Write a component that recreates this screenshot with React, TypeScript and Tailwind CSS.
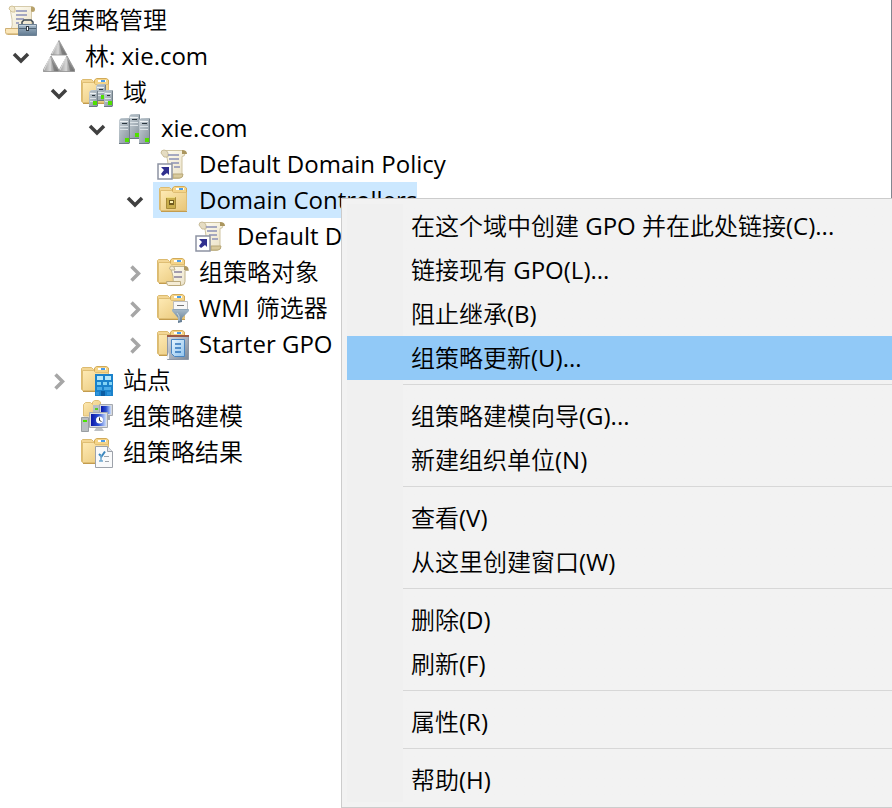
import React, { useState } from 'react';

type IconProps = { children: React.ReactNode };

const Icon = ({ children }: IconProps) => (
  <svg viewBox="0 0 32 32" className="size-8 shrink-0" aria-hidden="true">
    {children}
  </svg>
);

const Gradients = () => (
  <svg className="absolute size-0" aria-hidden="true">
    <defs>
      <linearGradient id="folder" x1="0" y1="0" x2="1" y2="1">
        <stop offset="0" stopColor="#feeab4" />
        <stop offset="1" stopColor="#e8c678" />
      </linearGradient>
      <linearGradient id="paper" x1="0" y1="0" x2="1" y2="1">
        <stop offset="0" stopColor="#fffdf2" />
        <stop offset="1" stopColor="#e9dfc4" />
      </linearGradient>
      <linearGradient id="metal" x1="0" y1="0" x2="1" y2="1">
        <stop offset="0" stopColor="#c9d2d8" />
        <stop offset="1" stopColor="#83909a" />
      </linearGradient>
      <linearGradient id="stone" x1="0" y1="0" x2="1" y2="0">
        <stop offset="0.1" stopColor="#a8a8a8" />
        <stop offset="0.45" stopColor="#d8d8d8" />
        <stop offset="0.55" stopColor="#b0b0b0" />
        <stop offset="1" stopColor="#7c7c7c" />
      </linearGradient>
      <linearGradient id="steel" x1="0" y1="0" x2="0" y2="1">
        <stop offset="0" stopColor="#a9bccb" />
        <stop offset="1" stopColor="#5f788f" />
      </linearGradient>
      <linearGradient id="frame" x1="0" y1="0" x2="1" y2="1">
        <stop offset="0" stopColor="#d9dde4" />
        <stop offset="1" stopColor="#7b8796" />
      </linearGradient>
      <linearGradient id="blue" x1="0" y1="0" x2="1" y2="1">
        <stop offset="0" stopColor="#e8f6ff" />
        <stop offset="1" stopColor="#8fc3ee" />
      </linearGradient>
      <linearGradient id="screen" x1="0" y1="0" x2="1" y2="0">
        <stop offset="0" stopColor="#0a16a8" />
        <stop offset="0.5" stopColor="#2b4fd0" />
        <stop offset="1" stopColor="#c9dcfb" />
      </linearGradient>
    </defs>
  </svg>
);

const Folder = () => (
  <>
    <path d="M0.5 4.5l1-1h9l2 2v20h-12z" fill="#f3d694" stroke="#dcbb70" />
    <path d="M13.500 9V4l2-1.500h10l2 1.500v5z" fill="#f4d488" stroke="#d2aa58" />
    <path d="M17 4h8v2h-8z" fill="#fff" />
    <path d="M20 4h4v2h-4z" fill="#4b9be6" />
    <path d="M1.500 6.500h11l2 2h13v18h-26z" fill="url(#folder)" stroke="#dfbe74" />
    <path d="M2 27.500h26" stroke="#c39c4e" />
  </>
);

type ServerProps = { x: number; y: number; w: number; h: number };

const Server = ({ x, y, w, h }: ServerProps) => (
  <g>
    <path d={`M${x} ${y + 2}l2-2h${w - 2}v${h - 1}l-1 1h-${w - 1}z`} fill="url(#metal)" />
    <path d={`M${x + 1} ${y + 1.5}h${w - 2}`} stroke="#aab6bf" />
    <path d={`M${x + 1} ${y + 3.5}h${w - 3}`} stroke="#eef2f4" />
    <path d={`M${x + 3} ${y + 5.5}h${w - 6}`} stroke="#2b363e" />
    <path d={`M${x + 1} ${y + 8.5}h${w - 3}M${x + 1} ${y + 11.5}h${w - 3}`} stroke="#dbe2e6" />
    <path d={`M${x + w - 0.5} ${y + 1}v${h - 2}`} stroke="#73808a" />
    <path d={`M${x} ${y + h - 0.5}h${w - 1}`} stroke="#6d7983" />
    <path d={`M${x + w - 5} ${y + h - 6}h4v4h-4z`} fill="#4fe000" />
  </g>
);

const ConsoleIcon = () => (
  <Icon>
    <path d="M5.500 2.500h21q3 0 3 3t-3 2v18H6q2-4 1-10T5.500 7z" fill="url(#paper)" stroke="#d6cbab" />
    <path d="M26 2.500q4 0 4 3t-4 2z" fill="#b7a16a" />
    <path d="M4 5q0-3 3-3t3 3v3H7z" fill="#f1e8cd" stroke="#d3c49b" />
    <path d="M11 7h11M11 11h11M11 15h8M11 19h3" stroke="#8a90b8" strokeWidth="1.500" />
    <path d="M0.500 24.500h14v6h-12q-2 0-2-3z" fill="#fbe6b8" stroke="#cfb074" />
    <path d="M1 29.500h12" stroke="#dfc58d" />
    <path d="M17 20v-2l2-2h7l2 2v2" fill="none" stroke="#3f4a53" strokeWidth="1.500" />
    <path d="M13.500 20.500h18v11h-18z" fill="url(#steel)" stroke="#6f8396" />
    <path d="M14 21.500h17" stroke="#c5d3de" />
    <path d="M14 24.500h17" stroke="#4f6375" />
    <path d="M21 22h3v5h-3z" fill="#343d45" />
    <path d="M22 23h1v3h-1z" fill="#fff" />
  </Icon>
);

const ForestIcon = () => (
  <Icon>
    <g fill="url(#stone)" stroke="#8d8d8d" strokeWidth="0.800" strokeLinejoin="round">
      <path d="M16 0.500l8 14.500H8z" />
      <path d="M8 16l7.800 14v1.500H0.300V30z" />
      <path d="M24 16l7.800 14v1.500H16.300V30z" />
    </g>
    <path d="M15 2L9 14M7 17.500L1 30M23 17.500L17 30" stroke="#eee" strokeWidth="0.800" />
    <path d="M16 2l7 12.500h-4zM8 18l7 13h-4zM24 18l7 13h-4z" fill="#555" fillOpacity="0.400" />
  </Icon>
);

const DomainsIcon = () => (
  <Icon>
    <Folder />
    <Server x={15} y={8} w={10} h={17} />
    <Server x={8} y={14} w={9} h={17} />
    <Server x={23} y={14} w={9} h={17} />
  </Icon>
);

const DomainIcon = () => (
  <Icon>
    <Server x={10} y={2} w={11} h={25} />
    <Server x={0} y={6} w={11} h={26} />
    <Server x={20} y={6} w={11} h={26} />
  </Icon>
);

const PolicyLinkIcon = () => (
  <Icon>
    <path d="M7 2.500h18q3 0 3 3t-3 3v19q-1 3-4 3H11V16q0-6-3-10z" fill="url(#paper)" stroke="#cfc4a2" />
    <path d="M25 2q5 0 5 4h-5z" fill="#ab965f" />
    <path d="M4 5q0-3 3-3t4 3v4H7z" fill="#e5dcc2" stroke="#c9bd9b" />
    <path d="M11 7h11M12 11h10M14 15h8M17 19h6" stroke="#8b90b5" strokeWidth="1.500" />
    <path d="M16 26h10q0 4-3 4h-7z" fill="#d8c99c" stroke="#b8a878" />
    <path d="M1 16h14v15H1z" fill="#fff" stroke="#8d93a3" strokeWidth="1.500" />
    <path d="M4 19h8v8l-2-2-4 3-2-2 3-4z" fill="#30308f" />
  </Icon>
);

const OuIcon = () => (
  <Icon>
    <g transform="translate(2 0)">
      <Folder />
    </g>
    <path d="M9.500 13.500h9v11h-9z" fill="#c9ad4c" stroke="#a88b38" />
    <path d="M9 13.500h9" stroke="#efdc86" />
    <path d="M12 16h5v5h-5z" fill="#6f591f" />
    <path d="M13 17h3v2h-3z" fill="#fff3b4" />
  </Icon>
);

const ObjectsIcon = () => (
  <Icon>
    <Folder />
    <path d="M14 10.500h14q3.500 0 3.500 4H28v11q0 4-4 4h-9q2-4 1-9t-2-7z" fill="url(#paper)" stroke="#c2b48c" />
    <path d="M27 10q5 0 4 4h-4z" fill="#b09a62" />
    <path d="M12.500 13q0-3 2.500-3t3 4h-4z" fill="#f3ead2" stroke="#c2b48c" />
    <path d="M17 16h8M17 21h8" stroke="#86809a" strokeWidth="1.500" />
    <path d="M9.500 25.500h14v4h-12q-2 0-2-4z" fill="#f5ecd5" stroke="#bba97c" />
  </Icon>
);

const FilterIcon = () => (
  <Icon>
    <Folder />
    <path d="M16.500 9.500h14v9h-14z" fill="#f8f8f8" stroke="#bcbcbc" />
    <path d="M20 13.500h7" stroke="#777" />
    <path d="M15 17h17v2l-7 7v4l-4 1v-5l-6-7z" fill="url(#steel)" />
    <path d="M16 17.500h15" stroke="#8fa5b7" />
    <path d="M20 21l2 3v5" stroke="#c5d6e2" fill="none" />
  </Icon>
);

const StarterIcon = () => (
  <Icon>
    <Folder />
    <path d="M10.500 7.500h21v24h-21z" fill="url(#frame)" stroke="#8f98a6" />
    <path d="M10 7h22v2H10z" fill="#9c5a45" />
    <path d="M9 31l3-7v7z" fill="#f4f5f7" />
    <path d="M14.500 11.500h13v17h-10l-3-3z" fill="url(#blue)" stroke="#4a86c2" />
    <path d="M18 16h6M18 20h6M18 24h6" stroke="#2f74ba" strokeWidth="1.500" />
  </Icon>
);

const SitesIcon = () => (
  <Icon>
    <Folder />
    <path d="M14 10h18v22H14z" fill="#1a82cb" />
    <path d="M16 12h6v4h-6zM24 12h6v4h-6z" fill="#b7e8fa" />
    <path d="M16 18h4v3h-4zM22 18h4v3h-4zM28 18h3v3h-3z" fill="#83d4f5" />
    <path d="M16 23h5v3h-5zM23 23h7v3h-7z" fill="#4bade8" />
    <path d="M15 28h3v3h-3zM26 28h4v3h-4z" fill="#2f95dc" />
    <path d="M20 27h4v5h-4z" fill="#0b5da3" />
  </Icon>
);

const ModelingIcon = () => (
  <Icon>
    <path d="M2.500 4.500l2-2h5l2 2V2l2-1.500h4l2 1.500v14h-17z" fill="url(#folder)" stroke="#e0c078" />
    <path d="M12 5h6v15h-6z" fill="#b9c0c4" />
    <path d="M14 8h3v2h-3z" fill="#55cc2a" />
    <path d="M18.500 4.500h13v11h-13z" fill="#d6d9df" stroke="#a5a9b0" />
    <path d="M20 6h10v8H20z" fill="url(#screen)" />
    <path d="M24 16h5v4h-5z" fill="#a5abb2" />
    <path d="M0.500 17.500h7v14h-7z" fill="#b9bec1" stroke="#999ea2" />
    <path d="M2 20h4v2H2z" fill="#49e400" />
    <path d="M8.500 12.500h18v15h-18z" fill="#dbdee3" stroke="#a5a9b0" />
    <path d="M10 14h15v12H10z" fill="url(#screen)" />
    <circle cx="18.500" cy="20" r="3.500" fill="#fff" />
    <path d="M18.500 17.500v3l2 1" stroke="#333" fill="none" />
    <path d="M15 28h6l2 3H13z" fill="#bcc0c4" />
  </Icon>
);

const ResultsIcon = () => (
  <Icon>
    <Folder />
    <path d="M14.500 10.500h12l5 5v16h-17z" fill="#f9fafb" stroke="#9da2aa" />
    <path d="M26.500 10.500v5h5" fill="#e2e5e9" stroke="#9da2aa" />
    <path d="M18 18l2.500 2.500 3.500-5" stroke="#3a86bd" strokeWidth="2" fill="none" />
    <path d="M20 19v6M18 25h4" stroke="#6fa8cf" strokeWidth="1.500" />
    <path d="M23 20.500h5M24 25.500h4" stroke="#9ea4ac" />
  </Icon>
);

type TreeNode = {
  label: string;
  icon: React.ReactNode;
  open?: boolean;
  selected?: boolean;
  children?: TreeNode[];
};

const domainNodes: TreeNode[] = [
  { label: 'Default Domain Policy', icon: <PolicyLinkIcon /> },
  {
    label: 'Domain Controllers',
    icon: <OuIcon />,
    open: true,
    selected: true,
    children: [{ label: 'Default D', icon: <PolicyLinkIcon /> }],
  },
  { label: '组策略对象', icon: <ObjectsIcon />, open: false },
  { label: 'WMI 筛选器', icon: <FilterIcon />, open: false },
  { label: 'Starter GPO', icon: <StarterIcon />, open: false },
];

const nodes: TreeNode[] = [
  {
    label: '林: xie.com',
    icon: <ForestIcon />,
    open: true,
    children: [
      {
        label: '域',
        icon: <DomainsIcon />,
        open: true,
        children: [{ label: 'xie.com', icon: <DomainIcon />, open: true, children: domainNodes }],
      },
      { label: '站点', icon: <SitesIcon />, open: false },
      { label: '组策略建模', icon: <ModelingIcon /> },
      { label: '组策略结果', icon: <ResultsIcon /> },
    ],
  },
];

const menuGroups = [
  ['在这个域中创建 GPO 并在此处链接(C)...', '链接现有 GPO(L)...', '阻止继承(B)', '组策略更新(U)...'],
  ['组策略建模向导(G)...', '新建组织单位(N)'],
  ['查看(V)', '从这里创建窗口(W)'],
  ['删除(D)', '刷新(F)'],
  ['属性(R)'],
  ['帮助(H)'],
];

const Label = ({ node }: { node: TreeNode }) => (
  <span className={`flex h-9 items-center gap-2.5 pl-1 ${node.selected ? 'bg-[#cce8ff]' : ''}`}>
    {node.icon}
    <span>{node.label}</span>
  </span>
);

const TreeItem = ({ node }: { node: TreeNode }) => {
  const [open, setOpen] = useState(node.open);

  return (
    <li role="treeitem" aria-expanded={open} aria-selected={!!node.selected}>
      <div className="flex items-center">
        <div className="flex w-[38px] shrink-0 justify-center">
          {node.open !== undefined && (
            <button type="button" aria-label={node.label} onClick={() => setOpen(!open)}>
              <svg viewBox="0 0 20 20" className="size-5" fill="none" strokeWidth="3.500">
                {open ? (
                  <path d="M4 8l7 7 7-7" stroke="#404040" />
                ) : (
                  <path d="M7.500 4.500l7 7-7 7" stroke="#a6a6a6" />
                )}
              </svg>
            </button>
          )}
        </div>
        <Label node={node} />
      </div>
      {open && node.children && (
        <ul role="group" className="pl-[38px]">
          {node.children.map((child) => (
            <TreeItem key={child.label} node={child} />
          ))}
        </ul>
      )}
    </li>
  );
};

const ContextMenu = () => (
  <div
    role="menu"
    className="absolute left-[341px] right-0 top-[198px] border-y border-l border-[#cccccc] bg-[#f2f2f2] py-[5px] pl-[5px]"
  >
    <div className="bg-linear-to-r from-[#f0f0f0] from-[56px] to-[#f2f2f2] to-[56px]">
      {menuGroups.map((group, index) => (
        <div key={group[0]} role="group">
          {index > 0 && (
            <div className="flex h-3.5 pl-14 pt-1">
              <hr className="grow border-[#d7d7d7]" />
            </div>
          )}
          {group.map((item) => (
            <button
              key={item}
              type="button"
              role="menuitem"
              className={`flex h-11 w-full items-center pl-16 text-left ${
                item === '组策略更新(U)...' ? 'bg-[#91c9f7]' : 'hover:bg-[#91c9f7]'
              }`}
            >
              {item}
            </button>
          ))}
        </div>
      ))}
    </div>
  </div>
);

export default function App() {
  return (
    <div className="relative min-h-screen overflow-hidden bg-white font-['Open_Sans','Noto_Sans_CJK_SC_DemiLight','Noto_Sans_CJK_SC',sans-serif] text-2xl whitespace-nowrap text-black">
      <Gradients />
      <main className="min-h-screen border-r border-[#828790] pl-px pt-0.5">
        <Label node={{ label: '组策略管理', icon: <ConsoleIcon /> }} />
        <ul role="tree" aria-label="组策略管理">
          {nodes.map((node) => (
            <TreeItem key={node.label} node={node} />
          ))}
        </ul>
      </main>
      <ContextMenu />
    </div>
  );
}
